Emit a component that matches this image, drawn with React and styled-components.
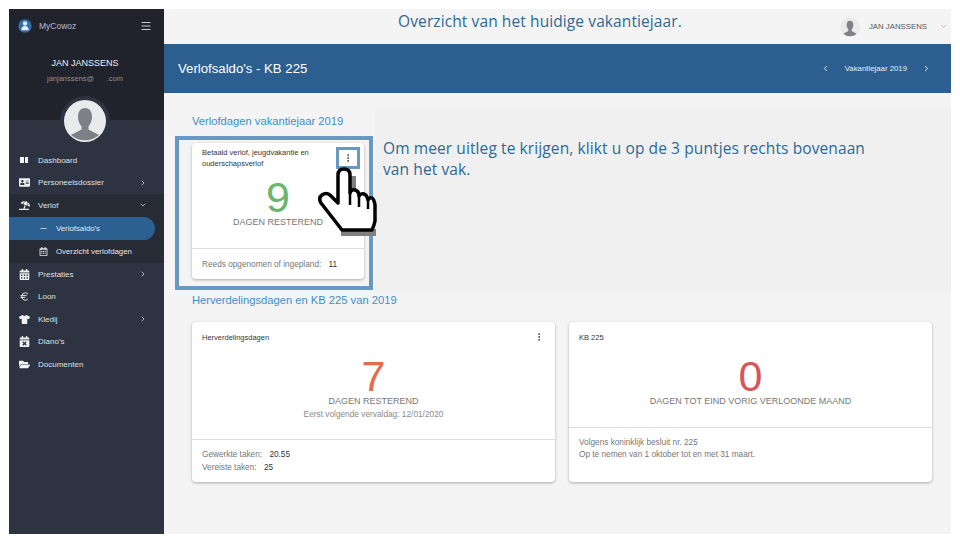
import React from 'react';
import styled, { createGlobalStyle } from 'styled-components';
import { ChevronDown, ChevronLeft, ChevronRight, Menu, EllipsisVertical, Minus, Euro } from 'lucide-react';
import { FaAddressCard, FaUmbrellaBeach, FaCalendarAlt, FaRegCalendarAlt, FaTshirt, FaCalendarTimes, FaFolderOpen } from 'react-icons/fa';

const GlobalStyle = createGlobalStyle`
  html, body { margin: 0; padding: 0; background: #fff; }
  body { font-family: "Liberation Sans", Arial, sans-serif; overflow: hidden; }
  * { box-sizing: border-box; }
`;

const Stage = styled.div`
  position: relative;
  width: 960px;
  height: 540px;
  padding: 9px;
  overflow: hidden;
`;

const Frame = styled.div`
  display: flex;
  width: 942px;
  height: 525px;
`;

const Sidebar = styled.aside`
  width: 155px;
  flex: none;
  background: #2d3340;
  color: #e4e6ea;
  display: flex;
  flex-direction: column;
`;

const SideTop = styled.div`
  height: 111px;
  flex: none;
  background: #20232c;
  position: relative;
`;

const BrandRow = styled.div`
  display: flex;
  align-items: center;
  height: 34px;
  padding: 0 12px 0 9px;
  font-size: 8.5px;
  color: #b9bcc3;
  gap: 7px;
  svg.menu { margin-left: auto; color: #c9ccd2; }
`;

const UserName = styled.div`
  margin-top: 15px;
  padding-right: 3px;
  text-align: center;
  font-size: 9px;
  line-height: 10px;
  color: #f0f1f3;
`;

const UserMail = styled.div`
  margin-top: 6px;
  padding-right: 3px;
  text-align: center;
  font-size: 7.5px;
  line-height: 10px;
  color: #8d9098;
`;

const AvatarRing = styled.div`
  position: absolute;
  left: 50%;
  top: 87px;
  width: 50px;
  height: 50px;
  margin-left: -27px;
  border-radius: 50%;
  background: #2d3340;
  display: flex;
  align-items: center;
  justify-content: center;
  z-index: 1;
`;

const Nav = styled.nav`
  margin-top: 29px;
  display: flex;
  flex-direction: column;
`;

const Item = styled.div`
  height: 22.6px;
  display: flex;
  align-items: center;
  padding: 0 17px 0 10px;
  font-size: 8px;
  color: #dfe1e5;
  gap: 8px;
  background: ${p => (p.$open ? '#272b36' : 'transparent')};
  & > svg:first-child { width: 11px; flex: none; color: #f0f1f3; }
  .chev { margin-left: auto; color: #c6c9cf; }
`;

const SubGroup = styled.div`
  background: #272b36;
  display: flex;
  flex-direction: column;
`;

const SubItem = styled.div`
  height: 23px;
  width: 146px;
  display: flex;
  align-items: center;
  padding-left: 30px;
  gap: 8px;
  font-size: 7.8px;
  color: #e6e8eb;
  background: ${p => (p.$active ? '#2c6090' : 'transparent')};
  border-radius: 0 12px 12px 0;
  & > svg { width: 9px; flex: none; }
`;

const Dual = styled.span`
  display: flex;
  gap: 1px;
  width: 8px;
  height: 6px;
  flex: none;
  margin: 0 2px 0 1px;
  i { flex: 1; background: #f0f1f3; }
`;

const Main = styled.main`
  flex: 1;
  background: #f4f4f4;
  display: flex;
  flex-direction: column;
  min-width: 0;
`;

const TopBar = styled.header`
  height: 35px;
  flex: none;
  position: relative;
  display: flex;
  align-items: center;
  padding-right: 4px;
  color: #54575e;
  font-size: 7.8px;
`;

const SlideTitle = styled.h1`
  margin: 0;
  position: absolute;
  left: 0;
  top: 2px;
  width: 752px;
  text-align: center;
  font: 400 15.5px/20px "Open Sans", sans-serif;
  letter-spacing: 0.1px;
  color: #2c6a94;
`;

const UserBox = styled.div`
  margin-left: auto;
  display: flex;
  align-items: center;
  gap: 9px;
  .chev { margin-left: 4px; color: #8b8e94; }
`;

const Banner = styled.div`
  height: 49px;
  flex: none;
  background: #2c5f8f;
  color: #fff;
  display: flex;
  align-items: center;
  padding: 0 20px 0 14px;
  font-size: 13.2px;
`;

const Pager = styled.div`
  margin-left: auto;
  display: flex;
  align-items: center;
  gap: 15px;
  font-size: 7.8px;
  color: #e6edf4;
`;

const Content = styled.div`
  padding: 21px 19px 0 28px;
`;

const SectionTitle = styled.h2`
  margin: ${p => p.$mt || 0}px 0 0;
  font-weight: 400;
  font-size: 11.2px;
  line-height: 14px;
  color: #3f8ec8;
`;

const Row = styled.div`
  display: flex;
  gap: 14px;
  margin-top: 15px;
`;

const Card = styled.section`
  width: ${p => p.$w}px;
  height: ${p => p.$h}px;
  background: #fff;
  border-radius: 4px;
  box-shadow: 0 1px 3px rgba(0, 0, 0, 0.3);
  display: flex;
  flex-direction: column;
`;

const CardHead = styled.div`
  display: flex;
  justify-content: space-between;
  padding: ${p => p.$pt}px 11px 0 10px;
  font-size: 7.5px;
  line-height: 11px;
  color: #34363a;
  svg { color: #333; flex: none; margin-top: ${p => p.$dotsTop || 0}px; }
`;

const CardBody = styled.div`
  flex: 1;
  text-align: center;
  color: #777;
  font-size: 9px;
`;

const Count = styled.div`
  font-size: 43px;
  line-height: 40px;
  color: ${p => p.$color};
  margin-top: ${p => p.$mt}px;
`;

const Label = styled.div`
  line-height: 11px;
`;

const Note = styled.div`
  font-size: 8.3px;
  line-height: 10px;
  margin-top: 2px;
  color: #8b8b8b;
`;

const CardFoot = styled.div`
  border-top: 1px solid #dedede;
  padding: ${p => p.$pt}px 10px 0;
  height: ${p => p.$h}px;
  flex: none;
  font-size: 8.25px;
  line-height: ${p => p.$lh || 12}px;
  color: #777;
  b { font-weight: 400; color: #333; margin-left: 5px; }
`;

const Callout = styled.div`
  position: absolute;
  left: 375px;
  top: 108px;
  width: 576px;
  height: 184px;
  background: #f0f0f0;
  padding: 30px 8px;
  font: 400 15.5px/21px "Open Sans", sans-serif;
  letter-spacing: 0.1px;
  color: #2c6a94;
`;

const HighlightBox = styled.div`
  position: absolute;
  left: ${p => p.$x}px;
  top: ${p => p.$y}px;
  width: ${p => p.$w}px;
  height: ${p => p.$h}px;
  border: ${p => p.$b}px solid #6699c4;
  pointer-events: none;
`;

const HandIcon = styled.svg`
  position: absolute;
  left: 318px;
  top: 167px;
`;

function Silhouette({ size, bg = '#e9eaec' }) {
  return (
    <svg width={size} height={size} viewBox="0 0 42 42">
      <circle cx="21" cy="21" r="21" fill={bg} />
      <path d="M21 8c-5 0-7 4-7 9 0 4 1.500 7 3.500 9.500v3L7 35a21 21 0 0 0 28 0l-10.500-5.500v-3C26.500 24 28 21 28 17c0-5-2-9-7-9z" fill="#7d8087" />
    </svg>
  );
}

function Logo() {
  return (
    <svg width="14" height="14" viewBox="0 0 13 13">
      <circle cx="6.500" cy="6.500" r="6.200" fill="#2f6ea8" />
      <circle cx="6.500" cy="4.200" r="2" fill="#e8edf2" />
      <path d="M3 10.500c0-3 1.500-4 3.500-4s3.500 1 3.500 4z" fill="#e8edf2" />
    </svg>
  );
}

function Hand() {
  return (
    <HandIcon width="60" height="72" viewBox="0 0 60 72">
      <path d="M32 9h6v24h-6zM23 62h35v7H23z" fill="#808080" />
      <path
        d="M20 36V8Q20 2 26 2T32 8V26Q33 22 37 23T41 29Q43 26 46 27T50 33Q52 30 54 31T57 38V54Q56 59 54 63H24L3 36Q0 31 4 28T12 28L20 36Z"
        fill="#fff"
        stroke="#000"
        strokeWidth="3.500"
        strokeLinejoin="round"
      />
      <path d="M32 26V38M41 29V40M50 33V42" stroke="#000" strokeWidth="2.500" fill="none" />
    </HandIcon>
  );
}

const Chev = () => <ChevronRight className="chev" size={8} strokeWidth={2.5} />;

export default function App() {
  return (
    <Stage>
      <GlobalStyle />
      <Frame>
        <Sidebar>
          <SideTop>
            <BrandRow>
              <Logo />
              <span>MyCowoz</span>
              <Menu className="menu" size={12} />
            </BrandRow>
            <UserName>JAN JANSSENS</UserName>
            <UserMail>janjanssens@&nbsp;&nbsp;&nbsp;&nbsp;&nbsp;&nbsp;.com</UserMail>
            <AvatarRing><Silhouette size={42} /></AvatarRing>
          </SideTop>
          <Nav>
            <Item><Dual><i /><i /></Dual>Dashboard</Item>
            <Item><FaAddressCard size={11} />Personeelsdossier<Chev /></Item>
            <Item $open><FaUmbrellaBeach size={11} />Verlof<ChevronDown className="chev" size={8} strokeWidth={2.5} /></Item>
            <SubGroup>
              <SubItem $active><Minus size={9} />Verlofsaldo's</SubItem>
              <SubItem><FaRegCalendarAlt size={9} />Overzicht verlofdagen</SubItem>
            </SubGroup>
            <Item><FaCalendarAlt size={11} />Prestaties<Chev /></Item>
            <Item><Euro size={11} />Loon</Item>
            <Item><FaTshirt size={11} />Kledij<Chev /></Item>
            <Item><FaCalendarTimes size={11} />Diano's</Item>
            <Item><FaFolderOpen size={11} />Documenten</Item>
          </Nav>
        </Sidebar>
        <Main>
          <TopBar>
            <SlideTitle>Overzicht van het huidige vakantiejaar.</SlideTitle>
            <UserBox>
              <Silhouette size={20} />
              JAN JANSSENS
              <ChevronDown className="chev" size={7} />
            </UserBox>
          </TopBar>
          <Banner>
            Verlofsaldo's - KB 225
            <Pager>
              <ChevronLeft size={9} strokeWidth={2.5} />
              Vakantiejaar 2019
              <ChevronRight size={9} strokeWidth={2.5} />
            </Pager>
          </Banner>
          <Content>
            <SectionTitle>Verlofdagen vakantiejaar 2019</SectionTitle>
            <Row>
              <Card $w={172} $h={136}>
                <CardHead $pt={4} $dotsTop={6}>
                  <span>Betaald verlof, jeugdvakantie en<br />ouderschapsverlof</span>
                  <EllipsisVertical size={10} />
                </CardHead>
                <CardBody>
                  <Count $color="#6cb56c" $mt={8}>9</Count>
                  <Label>DAGEN RESTEREND</Label>
                </CardBody>
                <CardFoot $h={31} $pt={10}>Reeds opgenomen of ingepland: <b>11</b></CardFoot>
              </Card>
            </Row>
            <SectionTitle $mt={14}>Herverdelingsdagen en KB 225 van 2019</SectionTitle>
            <Row>
              <Card $w={363} $h={160}>
                <CardHead $pt={10}>
                  <span>Herverdelingsdagen</span>
                  <EllipsisVertical size={10} />
                </CardHead>
                <CardBody>
                  <Count $color="#e56b4a" $mt={13}>7</Count>
                  <Label>DAGEN RESTEREND</Label>
                  <Note>Eerst volgende vervaldag: 12/01/2020</Note>
                </CardBody>
                <CardFoot $h={43} $pt={8} $lh={13}>Gewerkte taken: <b>20.55</b><br />Vereiste taken: <b>25</b></CardFoot>
              </Card>
              <Card $w={363} $h={160}>
                <CardHead $pt={10}><span>KB 225</span></CardHead>
                <CardBody>
                  <Count $color="#d9555a" $mt={13}>0</Count>
                  <Label>DAGEN TOT EIND VORIG VERLOONDE MAAND</Label>
                </CardBody>
                <CardFoot $h={55} $pt={9}>Volgens koninklijk besluit nr. 225<br />Op te nemen van 1 oktober tot en met 31 maart.</CardFoot>
              </Card>
            </Row>
          </Content>
        </Main>
      </Frame>
      <Callout>
        Om meer uitleg te krijgen, klikt u op de 3 puntjes rechts bovenaan<br />van het vak.
      </Callout>
      <HighlightBox $x={175} $y={136} $w={198} $h={154} $b={4} />
      <HighlightBox $x={336} $y={147} $w={24} $h={22} $b={3} />
      <Hand />
    </Stage>
  );
}
